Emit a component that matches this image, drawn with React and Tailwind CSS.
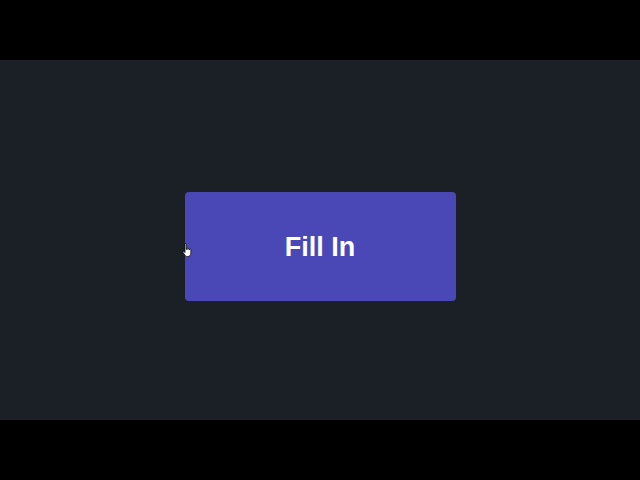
import React from 'react';

const HandCursor = () => (
  <svg width="11" height="15" viewBox="0 0 11 15" className="absolute left-[182px] top-[243px]">
    <path
      d="M3 1.2c0-.7 1.3-.7 1.3 0V6.5h.3V5.2c0-.6 1.2-.6 1.2 0v1.3h.3V5.8c0-.6 1.2-.6 1.2 0v1h.3v-.4c0-.6 1.2-.6 1.2 0V10c0 1.8-1 3.5-3 3.5H5.2C4 13.5 3.4 12.8 2.8 12L1 9.3c-.4-.6.4-1.3 1-.8L3 9.6z"
      fill="#fff"
      stroke="#000"
      strokeWidth="0.7"
    />
  </svg>
);

export default function App() {
  return (
    <div className="relative h-[480px] w-[640px] bg-black font-['Liberation_Sans',Arial,sans-serif]">
      <div className="h-[60px]" />
      <div className="flex h-[360px] justify-center bg-[#1b2027] pt-[132px]">
        <button className="flex h-[109px] w-[271px] items-center justify-center rounded-[4px] bg-[#4a47b7] pt-[1px] text-[27px] font-bold text-white">
          Fill In
        </button>
      </div>
      <HandCursor />
    </div>
  );
}
